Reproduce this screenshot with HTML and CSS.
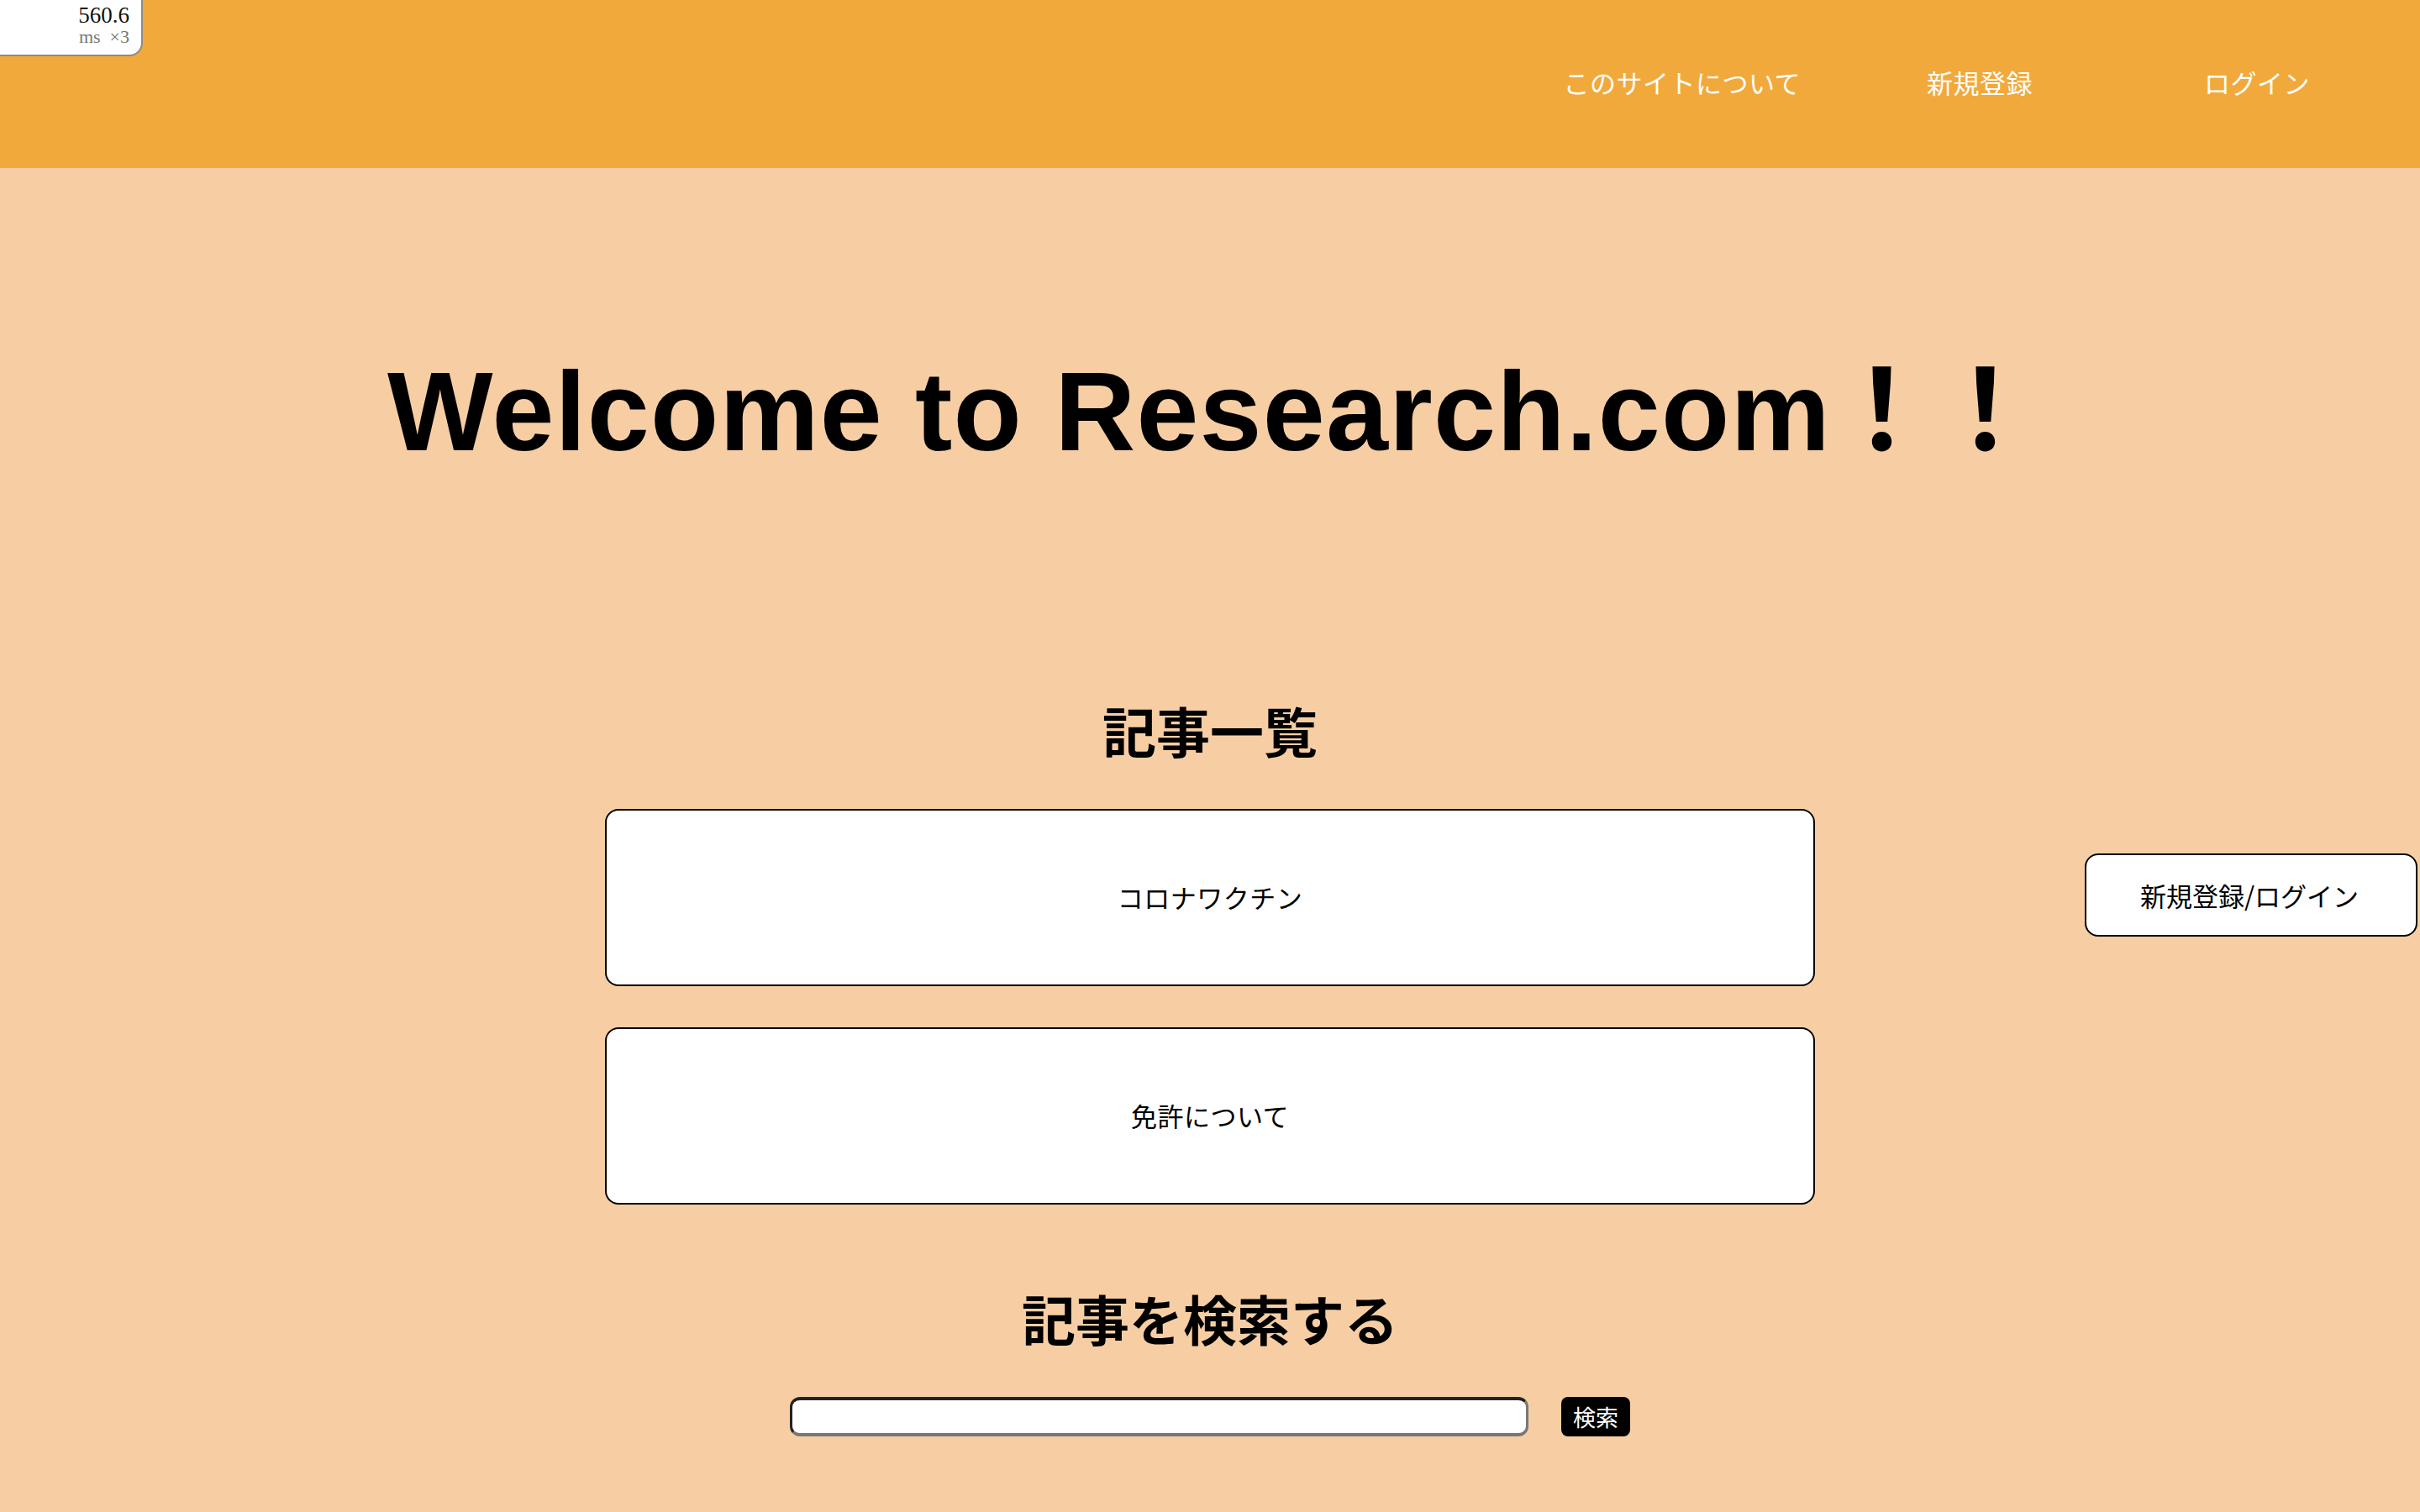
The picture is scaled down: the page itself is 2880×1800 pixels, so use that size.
FILE: index.html
```html
<!DOCTYPE html>
<html lang="ja">
<head>
<meta charset="utf-8">
<title>Research.com</title>
<link rel="stylesheet" href="styles.css">
</head>
<body>
<div class="perf">
  <div class="perf-num">560.6</div>
  <div class="perf-unit">ms&nbsp;&nbsp;×3</div>
</div>
<header class="site-header">
  <nav class="nav">
    <a class="nav-item nav-about" href="#">このサイトについて</a>
    <a class="nav-item nav-signup" href="#">新規登録</a>
    <a class="nav-item nav-login" href="#">ログイン</a>
  </nav>
</header>
<main class="main">
  <h1 class="title">Welcome to Research.com<span class="bang">！！</span></h1>
  <h2 class="section-title list-title">記事一覧</h2>
  <section class="list">
    <a class="card card-1" href="#">コロナワクチン</a>
    <a class="side-btn" href="#">新規登録/ログイン</a>
    <a class="card card-2" href="#">免許について</a>
  </section>
  <h2 class="section-title search-title">記事を検索する</h2>
  <form class="search">
    <input class="search-input" type="text">
    <button class="search-btn" type="button">検索</button>
  </form>
</main>
</body>
</html>
```

FILE: styles.css
```css
html, body {
  margin: 0;
  padding: 0;
}
body {
  background: #f7cea3;
  font-family: "Noto Sans CJK JP", "Liberation Sans", sans-serif;
  color: #000;
  width: 2880px;
  min-height: 1800px;
  position: relative;
}
a {
  color: inherit;
  text-decoration: none;
}

.perf {
  position: absolute;
  left: 0;
  top: 0;
  width: 168px;
  height: 65px;
  background: #fff;
  border-right: 2px solid #8a8a8a;
  border-bottom: 2px solid #8a8a8a;
  border-bottom-right-radius: 16px;
  font-family: "Liberation Serif", serif;
  text-align: right;
  box-sizing: content-box;
  z-index: 5;
}
.perf-num {
  font-size: 27px;
  line-height: 27px;
  padding: 5px 14px 0 0;
  color: #111;
}
.perf-unit {
  font-size: 22px;
  line-height: 24px;
  padding-right: 14px;
  color: #777;
}

.site-header {
  height: 200px;
  background: #f2a93c;
  display: flex;
  align-items: center;
  justify-content: flex-end;
}
.nav {
  display: flex;
  align-items: center;
  padding-right: 131px;
  margin-bottom: 4px;
}
.nav-item {
  color: #fff;
  font-size: 31px;
  line-height: 40px;
  font-weight: 400;
  letter-spacing: 0.5px;
}
.nav-signup {
  margin-left: 150px;
}
.nav-login {
  margin-left: 204px;
}

.main {
  display: flex;
  flex-direction: column;
  align-items: center;
}
.title {
  margin: 210px 0 0;
  font-family: "Liberation Sans", "Noto Sans CJK JP", sans-serif;
  font-weight: 700;
  font-size: 133px;
  line-height: 160px;
  letter-spacing: 1.2px;
}
.bang {
  letter-spacing: -10px;
  margin-left: -6px;
}
.section-title {
  margin: 0;
  font-size: 64px;
  line-height: 64px;
  font-weight: 700;
}
.list-title {
  margin-top: 266px;
}
.list {
  margin-top: 63px;
  width: 100%;
  display: grid;
  grid-template-columns: 1fr 1440px 1fr;
  row-gap: 49px;
}
.card {
  grid-column: 2;
  height: 211px;
  box-sizing: border-box;
  background: #fff;
  border: 2px solid #000;
  border-radius: 16px;
  display: flex;
  align-items: center;
  justify-content: center;
  font-size: 31px;
  letter-spacing: 0.5px;
  padding-bottom: 2px;
}
.card-1 { grid-row: 1; }
.card-2 { grid-row: 2; }
.side-btn {
  grid-column: 3;
  grid-row: 1;
  justify-self: end;
  align-self: center;
  margin: 0 3px 6px 0;
  width: 396px;
  height: 99px;
  box-sizing: border-box;
  background: #fff;
  border: 2px solid #000;
  border-radius: 16px;
  display: flex;
  align-items: center;
  justify-content: center;
  font-size: 31px;
  padding-right: 4px;
}
.search-title {
  margin-top: 102px;
}
.search {
  margin-top: 63px;
  display: flex;
  align-items: center;
  gap: 39px;
}
.search-input {
  width: 879px;
  height: 47px;
  box-sizing: border-box;
  margin: 0;
  background: #fff;
  border-style: solid;
  border-width: 4px 3px 4px 3px;
  border-color: #222 #777 #777 #222;
  border-radius: 12px;
  outline: none;
}
.search-btn {
  width: 82px;
  height: 47px;
  margin: 0;
  padding: 0;
  background: #000;
  color: #fff;
  border: none;
  border-radius: 8px;
  font-family: "Noto Sans CJK JP", sans-serif;
  font-size: 27px;
  line-height: 47px;
}
```
